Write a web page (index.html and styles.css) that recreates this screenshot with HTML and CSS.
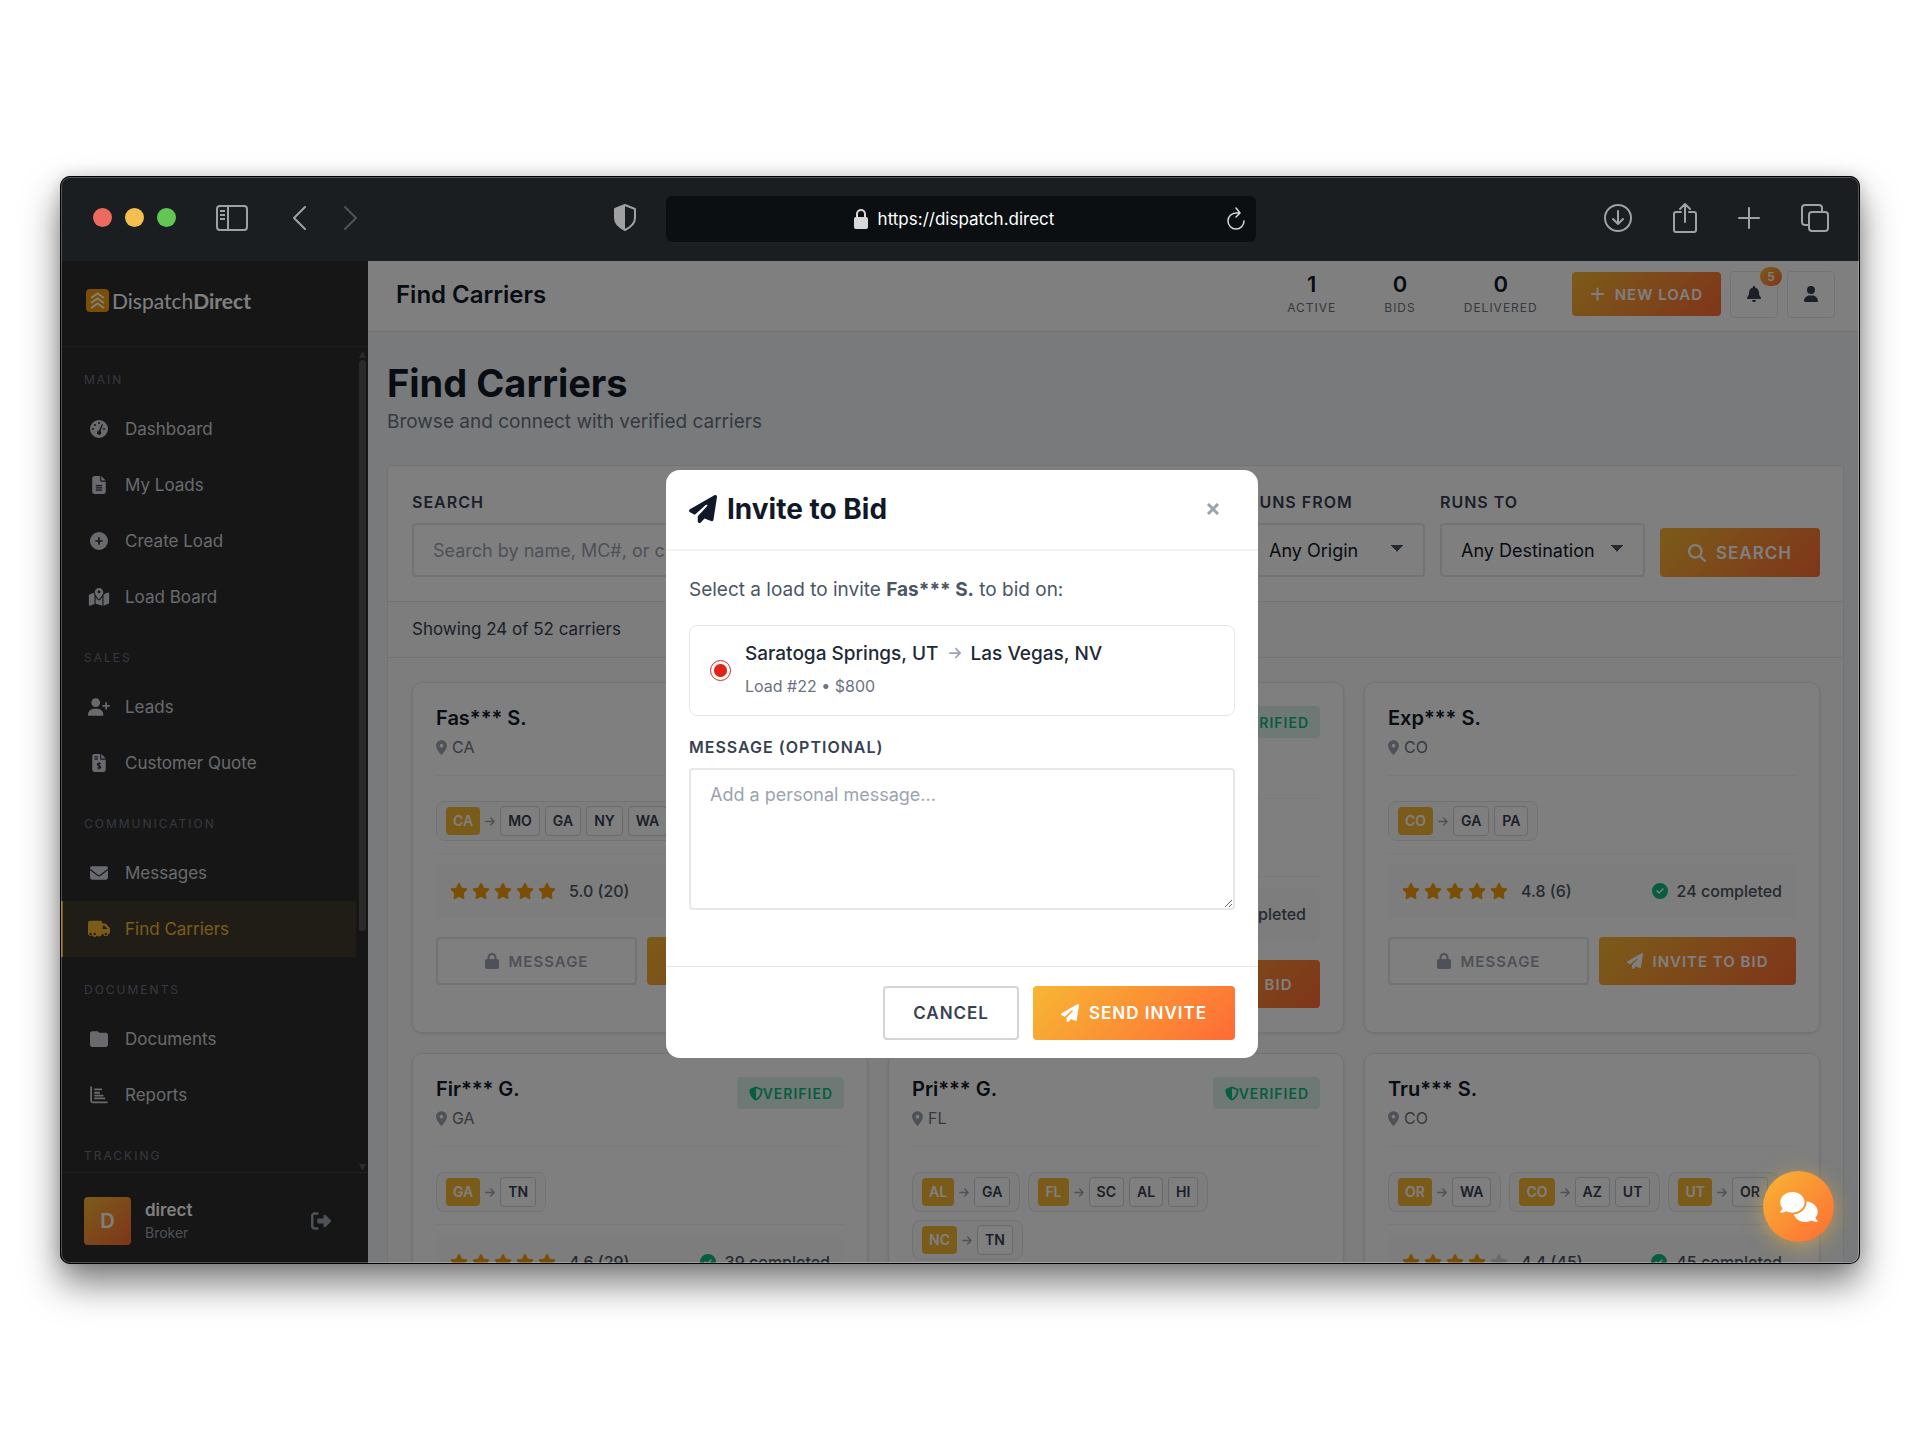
FILE: index.html
```
<!DOCTYPE html>
<html lang="en">
<head>
    <meta charset="UTF-8">
    <meta name="viewport" content="width=device-width, initial-scale=1.0">
    <title>Find Carriers - DispatchDirect</title>
    <link rel="stylesheet" href="styles.css">
</head>
<body>
    <!-- Icon sprite -->
    <svg class="sprite" aria-hidden="true">
        <symbol id="i-plane" viewBox="0 0 512 512"><path d="M498.1 5.6c10.1 7 15.4 19.1 13.5 31.2l-64 416c-1.5 9.7-7.4 18.2-16 23s-18.9 5.4-28 1.6L284 427.7l-68.5 74.1c-8.9 9.7-22.9 12.9-35.2 8.1S160 493.2 160 480V396.4c0-4 1.5-7.8 4.2-10.7L331.8 202.8c5.8-6.3 5.6-16-.4-22s-15.7-6.4-22-.7L106 360.8 17.7 316.6C7.1 311.3 .3 300.7 0 288.9s5.9-22.8 16.1-28.7l448-256c10.7-6.1 23.9-5.5 34 1.4z"/></symbol>
        <symbol id="i-star" viewBox="0 0 576 512"><path d="M316.9 18C311.6 7 300.4 0 288.1 0s-23.4 7-28.8 18L195 150.3 51.4 171.5c-12 1.8-22 10.2-25.7 21.7s-.7 24.2 7.9 32.7L137.8 329 113.2 474.7c-2 12 3 24.2 12.9 31.3s23 8 33.8 2.3l128.3-68.5 128.3 68.5c10.8 5.7 23.9 4.9 33.8-2.3s14.9-19.3 12.9-31.3L438.5 329 542.7 225.9c8.6-8.5 11.7-21.2 7.9-32.7s-13.7-19.9-25.7-21.7L381.2 150.3 316.9 18z"/></symbol>
        <symbol id="i-lock" viewBox="0 0 448 512"><path d="M144 144v48H304V144c0-44.2-35.8-80-80-80s-80 35.8-80 80zM80 192V144C80 64.5 144.5 0 224 0s144 64.5 144 144v48h16c35.3 0 64 28.7 64 64V448c0 35.3-28.7 64-64 64H64c-35.3 0-64-28.7-64-64V256c0-35.3 28.7-64 64-64H80z"/></symbol>
        <symbol id="i-pin" viewBox="0 0 384 512"><path d="M215.7 499.2C267 435 384 279.4 384 192C384 86 298 0 192 0S0 86 0 192c0 87.4 117 243 168.3 307.2c12.3 15.3 35.1 15.3 47.4 0zM192 128a64 64 0 1 1 0 128 64 64 0 1 1 0-128z"/></symbol>
        <symbol id="i-check" viewBox="0 0 512 512"><path d="M256 512A256 256 0 1 0 256 0a256 256 0 1 0 0 512zM369 209L241 337c-9.4 9.4-24.6 9.4-33.9 0l-64-64c-9.4-9.4-9.4-24.6 0-33.9s24.6-9.4 33.9 0l47 47L335 175c9.4-9.4 24.6-9.4 33.9 0s9.4 24.6 0 33.9z"/></symbol>
        <symbol id="i-shield" viewBox="0 0 512 512"><path d="M256 0c4.6 0 9.2 1 13.4 2.9L457.7 82.8c22 9.3 38.4 31 38.3 57.2c-.5 99.2-41.3 280.7-213.6 363.2c-16.7 8-36.1 8-52.8 0C57.3 420.7 16.5 239.2 16 140c-.1-26.2 16.3-47.9 38.3-57.2L242.7 2.9C246.8 1 251.4 0 256 0zm0 66.8V444.8C394 378 431.1 230.1 432 141.4L256 66.8z"/></symbol>
        <symbol id="i-arrow" viewBox="0 0 448 512"><path d="M438.6 278.6c12.5-12.5 12.5-32.8 0-45.3l-160-160c-12.5-12.5-32.8-12.5-45.3 0s-12.5 32.8 0 45.3L338.8 224 32 224c-17.7 0-32 14.3-32 32s14.3 32 32 32l306.7 0L233.4 393.4c-12.5 12.5-12.5 32.8 0 45.3s32.8 12.5 45.3 0l160-160z"/></symbol>
        <symbol id="i-plus" viewBox="0 0 448 512"><path d="M256 80c0-17.7-14.3-32-32-32s-32 14.3-32 32V224H48c-17.7 0-32 14.3-32 32s14.3 32 32 32H192V432c0 17.7 14.3 32 32 32s32-14.3 32-32V288H400c17.7 0 32-14.3 32-32s-14.3-32-32-32H256V80z"/></symbol>
    </svg>

    <div class="browser">
        <div class="toolbar">
            <div class="toolbar-side">
                <div class="lights">
                    <span class="light red"></span>
                    <span class="light yellow"></span>
                    <span class="light green"></span>
                </div>
                <svg class="panel-icon" width="32" height="26" viewBox="0 0 32 26" fill="none" stroke="currentColor" stroke-width="2"><rect x="1" y="1" width="30" height="24" rx="3"/><path d="M12 1v24M4 6h5M4 10h5M4 14h5"/></svg>
                <svg class="back-icon" width="14" height="24" viewBox="0 0 14 24" fill="none" stroke="currentColor" stroke-width="2" stroke-linecap="round" stroke-linejoin="round"><path d="M13 1L2 12l11 11"/></svg>
                <svg class="forward-icon" width="14" height="24" viewBox="0 0 14 24" fill="none" stroke="currentColor" stroke-width="2" stroke-linecap="round" stroke-linejoin="round"><path d="M1 1l11 11L1 23"/></svg>
                <svg class="privacy-icon" width="22" height="27" viewBox="0 0 22 27"><path d="M11 1L21 5v9c0 6-4 9-10 12C5 23 1 20 1 14V5z" fill="none" stroke="currentColor" stroke-width="2" stroke-linejoin="round"/><path d="M11 1v25C5 23 1 20 1 14V5z" fill="currentColor"/></svg>
            </div>
            <div class="address">
                <svg width="14" height="20" viewBox="0 0 14 20"><rect y="8" width="14" height="12" rx="2" fill="currentColor"/><path d="M3 9V5a4 4 0 0 1 8 0v4" fill="none" stroke="currentColor" stroke-width="2"/></svg>
                <span class="address-text">https://dispatch.direct</span>
                <svg class="reload-icon" width="18" height="24" viewBox="0 0 18 24" fill="none" stroke="currentColor" stroke-width="1.5" stroke-linecap="round" stroke-linejoin="round"><path d="M17 14a8 8 0 1 1-8-8h3M9 1l4 5-4 4"/></svg>
            </div>
            <div class="toolbar-side end">
                <svg width="28" height="28" viewBox="0 0 28 28" fill="none" stroke="currentColor" stroke-width="2" stroke-linecap="round" stroke-linejoin="round"><circle cx="14" cy="14" r="13"/><path d="M14 7v13M9 15l5 5 5-5"/></svg>
                <svg width="24" height="30" viewBox="0 0 24 30" fill="none" stroke="currentColor" stroke-width="2" stroke-linecap="round" stroke-linejoin="round"><path d="M8 9H3a2 2 0 0 0-2 2v16a2 2 0 0 0 2 2h18a2 2 0 0 0 2-2V11a2 2 0 0 0-2-2h-5M12 19V1M7 6l5-5 5 5"/></svg>
                <svg width="22" height="22" viewBox="0 0 22 22" fill="none" stroke="currentColor" stroke-width="2" stroke-linecap="round"><path d="M11 1v20M1 11h20"/></svg>
                <svg width="28" height="28" viewBox="0 0 28 28" fill="none" stroke="currentColor" stroke-width="2" stroke-linejoin="round"><rect x="8" y="8" width="19" height="19" rx="3"/><path d="M8 21H4a3 3 0 0 1-3-3V4a3 3 0 0 1 3-3h14a3 3 0 0 1 3 3v4"/></svg>
            </div>
        </div>

        <div class="app">
            <aside class="sidebar">
                <div class="brand">
                    <svg width="23" height="23" viewBox="0 0 23 23"><rect width="23" height="23" rx="4" fill="#f59e0b"/><path d="M5 9l6.500-4.500L18 9M5 14l6.500-4.500L18 14M5 19l6.500-4.500L18 19" fill="none" stroke="#fff" stroke-width="2"/></svg>
                    <span class="brand-name">Dispatch<b>Direct</b></span>
                </div>
                <nav class="nav">
                    <div class="nav-label">Main</div>
                    <a href="#" class="nav-item"><svg viewBox="0 0 18 18"><path fill-rule="evenodd" d="M9 0a9 9 0 1 1 0 18A9 9 0 0 1 9 0zM9 2a1 1 0 1 0 0 2 1 1 0 0 0 0-2zM5 4a1 1 0 1 0 0 2 1 1 0 0 0 0-2zM3 8a1 1 0 1 0 0 2 1 1 0 0 0 0-2zM14 8a1 1 0 1 0 0 2 1 1 0 0 0 0-2zM12 4L9 10.500a2.200 2.200 0 1 0 1.500.5L13 4.500z"/></svg>Dashboard</a>
                    <a href="#" class="nav-item"><svg viewBox="0 0 384 512"><path d="M64 0C28.700 0 0 28.700 0 64V448c0 35.300 28.700 64 64 64H320c35.300 0 64-28.700 64-64V160H256c-17.700 0-32-14.300-32-32V0H64zM256 0V128H384L256 0zM112 256H272c8.800 0 16 7.200 16 16s-7.200 16-16 16H112c-8.800 0-16-7.200-16-16s7.200-16 16-16zm0 64H272c8.800 0 16 7.200 16 16s-7.200 16-16 16H112c-8.800 0-16-7.200-16-16s7.200-16 16-16zm0 64H272c8.800 0 16 7.200 16 16s-7.200 16-16 16H112c-8.800 0-16-7.200-16-16s7.200-16 16-16z"/></svg>My Loads</a>
                    <a href="#" class="nav-item"><svg viewBox="0 0 512 512"><path d="M256 512A256 256 0 1 0 256 0a256 256 0 1 0 0 512zM232 344V280H168c-13.300 0-24-10.700-24-24s10.700-24 24-24h64V168c0-13.300 10.700-24 24-24s24 10.700 24 24v64h64c13.300 0 24 10.700 24 24s-10.700 24-24 24H280v64c0 13.300-10.700 24-24 24s-24-10.700-24-24z"/></svg>Create Load</a>
                    <a href="#" class="nav-item"><svg viewBox="0 0 576 512"><path d="M408 120c0 54.600-73.100 151.900-105.200 192c-7.700 9.600-22 9.600-29.600 0C241.100 271.900 168 174.600 168 120C168 53.700 221.700 0 288 0s120 53.700 120 120zm8 80.400c3.500-6.900 6.700-13.800 9.600-20.600c.5-1.200 1-2.500 1.500-3.700l116-46.400C558.900 123.400 576 135 576 152V422.800c0 9.800-6 18.600-15.100 22.300L416 503V200.400zM137.600 138.300c2.400 14.100 7.200 28.300 12.800 41.500c2.900 6.800 6.100 13.700 9.600 20.600V451.800L32.900 502.700C17.100 509 0 497.400 0 480.400V209.600c0-9.800 6-18.600 15.100-22.300l122.600-49zM327.800 332c13.900-17.400 35.700-45.700 56.200-77V504.300L192 449.400V255c20.500 31.300 42.300 59.600 56.200 77c20.500 25.600 59.100 25.600 79.600 0zM288 152a40 40 0 1 0 0-80 40 40 0 1 0 0 80z"/></svg>Load Board</a>

                    <div class="nav-label">Sales</div>
                    <a href="#" class="nav-item"><svg viewBox="0 0 640 512"><path d="M96 128a128 128 0 1 1 256 0A128 128 0 1 1 96 128zM0 482.300C0 383.800 79.800 304 178.300 304h91.400C368.200 304 448 383.800 448 482.300c0 16.400-13.300 29.700-29.700 29.700H29.700C13.300 512 0 498.700 0 482.300zM504 312V248H440c-13.300 0-24-10.700-24-24s10.700-24 24-24h64V136c0-13.300 10.700-24 24-24s24 10.700 24 24v64h64c13.300 0 24 10.700 24 24s-10.700 24-24 24H552v64c0 13.300-10.700 24-24 24s-24-10.700-24-24z"/></svg>Leads</a>
                    <a href="#" class="nav-item"><svg viewBox="0 0 384 512"><path fill-rule="evenodd" d="M64 0C28.700 0 0 28.700 0 64V448c0 35.300 28.700 64 64 64H320c35.300 0 64-28.700 64-64V160H256c-17.700 0-32-14.300-32-32V0H64zM256 0V128H384L256 0zM64 64h96v32H64zM64 128h96v32H64z"/><path class="cut" d="M240 280c-20-18-96-20-96 18 0 46 100 26 100 74 0 40-76 38-104 14M192 232v208"/></svg>Customer Quote</a>

                    <div class="nav-label">Communication</div>
                    <a href="#" class="nav-item"><svg viewBox="0 0 512 512"><path d="M48 64C21.500 64 0 85.500 0 112c0 15.100 7.100 29.300 19.200 38.400L236.800 313.600c11.400 8.500 27 8.500 38.400 0L492.800 150.400c12.100-9.100 19.200-23.300 19.200-38.400c0-26.500-21.500-48-48-48H48zM0 176V384c0 35.300 28.700 64 64 64H448c35.300 0 64-28.700 64-64V176L294.400 339.200c-22.800 17.100-54 17.100-76.800 0L0 176z"/></svg>Messages</a>
                    <a href="#" class="nav-item active"><svg viewBox="0 0 640 512"><path fill-rule="evenodd" d="M64 16h300q52 0 52 52v28h70q24 0 42 18l88 90q24 24 24 50v90q0 50-48 60a76 76 0 0 1-150 0h-36a76 76 0 0 1-142 34A76 76 0 0 1 120 438 76 76 0 0 1 0 400V80Q0 16 64 16zM430 160v96h140l-92-96zM76 368a34 34 0 1 0 0 68 34 34 0 0 0 0-68zM196 368a34 34 0 1 0 0 68 34 34 0 0 0 0-68zM518 368a34 34 0 1 0 0 68 34 34 0 0 0 0-68z"/></svg>Find Carriers</a>

                    <div class="nav-label">Documents</div>
                    <a href="#" class="nav-item"><svg viewBox="0 0 512 512"><path d="M64 480H448c35.300 0 64-28.700 64-64V142c0-35.300-28.700-64-64-64H268L235 48C223 36 212 32 192 32H64C28.700 32 0 60.700 0 96V416c0 35.300 28.700 64 64 64z"/></svg>Documents</a>
                    <a href="#" class="nav-item"><svg viewBox="0 0 512 512"><path class="line" d="M32 32v390q0 42 42 42h406M140 96h180M140 192h120M140 272h220M140 352h270"/></svg>Reports</a>

                    <div class="nav-label">Tracking</div>
                </nav>
                <div class="scrollbar"><span class="scroll-arrow up"></span><span class="scroll-thumb"></span><span class="scroll-arrow down"></span></div>
                <div class="account">
                    <div class="avatar">D</div>
                    <div class="account-info">
                        <div class="account-name">direct</div>
                        <div class="account-role">Broker</div>
                    </div>
                    <button class="logout" aria-label="Log out"><svg width="20" height="20" viewBox="0 0 512 512"><path d="M377.900 105.900L500.700 228.700c7.200 7.200 11.300 17.100 11.300 27.300s-4.100 20.100-11.300 27.300L377.900 406.100c-6.400 6.400-15 9.900-24 9.900c-18.700 0-33.900-15.200-33.900-33.900l0-62.100-128 0c-17.700 0-32-14.300-32-32l0-64c0-17.700 14.300-32 32-32l128 0 0-62.100c0-18.700 15.200-33.900 33.900-33.900c9 0 17.600 3.600 24 9.900zM160 96L96 96c-17.700 0-32 14.300-32 32l0 256c0 17.700 14.300 32 32 32l64 0c17.700 0 32 14.300 32 32s-14.300 32-32 32l-64 0c-53 0-96-43-96-96L0 128C0 75 43 32 96 32l64 0c17.700 0 32 14.300 32 32s-14.300 32-32 32z"/></svg></button>
                </div>
            </aside>

            <main class="main">
                <header class="topbar">
                    <div class="topbar-title">Find Carriers</div>
                    <div class="stats">
                        <div class="stat"><div class="stat-value">1</div><div class="stat-label">Active</div></div>
                        <div class="stat"><div class="stat-value">0</div><div class="stat-label">Bids</div></div>
                        <div class="stat"><div class="stat-value">0</div><div class="stat-label">Delivered</div></div>
                    </div>
                    <div class="topbar-actions">
                        <button class="btn btn-primary btn-new"><svg width="15" height="16"><use href="#i-plus"/></svg>New Load</button>
                        <button class="icon-btn" aria-label="Notifications">
                            <svg width="14" height="16" viewBox="0 0 448 512"><path d="M224 0c-17.700 0-32 14.300-32 32V51.200C119 66 64 130.600 64 208v18.800c0 47-17.300 92.400-48.500 127.600l-7.400 8.300c-8.400 9.400-10.400 22.900-5.300 34.400S19.400 416 32 416H416c12.600 0 24-7.400 29.200-18.900s3.100-25-5.300-34.400l-7.400-8.300C401.300 319.200 384 273.900 384 226.800V208c0-77.400-55-142-128-156.800V32c0-17.700-14.300-32-32-32zm45.300 493.300c12-12 18.700-28.300 18.700-45.300H224 160c0 17 6.700 33.300 18.700 45.300s28.300 18.700 45.300 18.700s33.300-6.700 45.300-18.700z"/></svg>
                            <span class="badge">5</span>
                        </button>
                        <button class="icon-btn" aria-label="Profile"><svg width="14" height="16" viewBox="0 0 448 512"><path d="M224 256A128 128 0 1 0 224 0a128 128 0 1 0 0 256zm-45.700 48C79.800 304 0 383.800 0 482.300C0 498.700 13.300 512 29.700 512H418.300c16.400 0 29.700-13.300 29.700-29.700C448 383.800 368.200 304 269.700 304H178.300z"/></svg></button>
                    </div>
                </header>

                <div class="content">
                    <h1>Find Carriers</h1>
                    <p class="subtitle">Browse and connect with verified carriers</p>

                    <section class="panel">
                        <form class="filters">
                            <div class="field grow">
                                <label for="q">Search</label>
                                <input id="q" type="text" placeholder="Search by name, MC#, or city...">
                            </div>
                            <div class="field from">
                                <label for="from">Runs From</label>
                                <select id="from"><option>Any Origin</option></select>
                            </div>
                            <div class="field to">
                                <label for="to">Runs To</label>
                                <select id="to"><option>Any Destination</option></select>
                            </div>
                            <button type="button" class="btn btn-primary btn-search"><svg width="18" height="18" viewBox="0 0 512 512"><path d="M416 208c0 45.900-14.900 88.300-40 122.700L502.600 457.400c12.500 12.500 12.500 32.800 0 45.300s-32.800 12.500-45.300 0L330.700 376c-34.400 25.200-76.800 40-122.700 40C93.100 416 0 322.900 0 208S93.100 0 208 0S416 93.100 416 208zM208 352a144 144 0 1 0 0-288 144 144 0 1 0 0 288z"/></svg>Search</button>
                        </form>
                        <div class="result-count">Showing 24 of 52 carriers</div>

                        <div class="cards">
                            <article class="card">
                                <div class="card-head">
                                    <div><h3>Fas*** S.</h3><div class="place"><svg><use href="#i-pin"/></svg>CA</div></div>
                                </div>
                                <div class="lanes">
                                    <div class="lane"><b>CA</b><svg><use href="#i-arrow"/></svg><span>MO</span><span>GA</span><span>NY</span><span>WA</span></div>
                                </div>
                                <div class="rating">
                                    <div class="stars"><svg><use href="#i-star"/></svg><svg><use href="#i-star"/></svg><svg><use href="#i-star"/></svg><svg><use href="#i-star"/></svg><svg><use href="#i-star"/></svg></div>
                                    <span>5.0 (20)</span>
                                    <span class="completed"><svg><use href="#i-check"/></svg>31 completed</span>
                                </div>
                                <div class="card-actions">
                                    <button class="btn btn-outline" disabled><svg width="14" height="16"><use href="#i-lock"/></svg>Message</button>
                                    <button class="btn btn-primary"><svg width="16" height="16"><use href="#i-plane"/></svg>Invite to Bid</button>
                                </div>
                            </article>

                            <article class="card">
                                <div class="card-head">
                                    <div><h3>Roa*** L.</h3><div class="place"><svg><use href="#i-pin"/></svg>TX</div><div class="place">MC# hidden</div></div>
                                    <span class="verified"><svg><use href="#i-shield"/></svg>Verified</span>
                                </div>
                                <div class="lanes">
                                    <div class="lane"><b>TX</b><svg><use href="#i-arrow"/></svg><span>CA</span></div>
                                </div>
                                <div class="rating">
                                    <div class="stars"><svg><use href="#i-star"/></svg><svg><use href="#i-star"/></svg><svg><use href="#i-star"/></svg><svg><use href="#i-star"/></svg><svg><use href="#i-star"/></svg></div>
                                    <span>4.9 (12)</span>
                                    <span class="completed"><svg><use href="#i-check"/></svg>28 completed</span>
                                </div>
                                <div class="card-actions">
                                    <button class="btn btn-outline" disabled><svg width="14" height="16"><use href="#i-lock"/></svg>Message</button>
                                    <button class="btn btn-primary"><svg width="16" height="16"><use href="#i-plane"/></svg>Invite to Bid</button>
                                </div>
                            </article>

                            <article class="card">
                                <div class="card-head">
                                    <div><h3>Exp*** S.</h3><div class="place"><svg><use href="#i-pin"/></svg>CO</div></div>
                                </div>
                                <div class="lanes">
                                    <div class="lane"><b>CO</b><svg><use href="#i-arrow"/></svg><span>GA</span><span>PA</span></div>
                                </div>
                                <div class="rating">
                                    <div class="stars"><svg><use href="#i-star"/></svg><svg><use href="#i-star"/></svg><svg><use href="#i-star"/></svg><svg><use href="#i-star"/></svg><svg><use href="#i-star"/></svg></div>
                                    <span>4.8 (6)</span>
                                    <span class="completed"><svg><use href="#i-check"/></svg>24 completed</span>
                                </div>
                                <div class="card-actions">
                                    <button class="btn btn-outline" disabled><svg width="14" height="16"><use href="#i-lock"/></svg>Message</button>
                                    <button class="btn btn-primary"><svg width="16" height="16"><use href="#i-plane"/></svg>Invite to Bid</button>
                                </div>
                            </article>

                            <article class="card">
                                <div class="card-head">
                                    <div><h3>Fir*** G.</h3><div class="place"><svg><use href="#i-pin"/></svg>GA</div></div>
                                    <span class="verified"><svg><use href="#i-shield"/></svg>Verified</span>
                                </div>
                                <div class="lanes">
                                    <div class="lane"><b>GA</b><svg><use href="#i-arrow"/></svg><span>TN</span></div>
                                </div>
                                <div class="rating">
                                    <div class="stars"><svg><use href="#i-star"/></svg><svg><use href="#i-star"/></svg><svg><use href="#i-star"/></svg><svg><use href="#i-star"/></svg><svg><use href="#i-star"/></svg></div>
                                    <span>4.6 (29)</span>
                                    <span class="completed"><svg><use href="#i-check"/></svg>39 completed</span>
                                </div>
                            </article>

                            <article class="card">
                                <div class="card-head">
                                    <div><h3>Pri*** G.</h3><div class="place"><svg><use href="#i-pin"/></svg>FL</div></div>
                                    <span class="verified"><svg><use href="#i-shield"/></svg>Verified</span>
                                </div>
                                <div class="lanes">
                                    <div class="lane"><b>AL</b><svg><use href="#i-arrow"/></svg><span>GA</span></div>
                                    <div class="lane"><b>FL</b><svg><use href="#i-arrow"/></svg><span>SC</span><span>AL</span><span>HI</span></div>
                                    <div class="lane"><b>NC</b><svg><use href="#i-arrow"/></svg><span>TN</span></div>
                                </div>
                            </article>

                            <article class="card">
                                <div class="card-head">
                                    <div><h3>Tru*** S.</h3><div class="place"><svg><use href="#i-pin"/></svg>CO</div></div>
                                </div>
                                <div class="lanes">
                                    <div class="lane"><b>OR</b><svg><use href="#i-arrow"/></svg><span>WA</span></div>
                                    <div class="lane"><b>CO</b><svg><use href="#i-arrow"/></svg><span>AZ</span><span>UT</span></div>
                                    <div class="lane"><b>UT</b><svg><use href="#i-arrow"/></svg><span>OR</span></div>
                                </div>
                                <div class="rating">
                                    <div class="stars"><svg><use href="#i-star"/></svg><svg><use href="#i-star"/></svg><svg><use href="#i-star"/></svg><svg><use href="#i-star"/></svg><svg class="off"><use href="#i-star"/></svg></div>
                                    <span>4.4 (45)</span>
                                    <span class="completed"><svg><use href="#i-check"/></svg>45 completed</span>
                                </div>
                            </article>
                        </div>
                    </section>
                </div>
            </main>

            <!-- Invite modal -->
            <div class="overlay">
                <div class="modal" role="dialog" aria-labelledby="modal-title">
                    <div class="modal-head">
                        <h2 id="modal-title"><svg width="28" height="28"><use href="#i-plane"/></svg>Invite to Bid</h2>
                        <button class="close" aria-label="Close"><svg width="12" height="12" viewBox="0 0 12 12" fill="none" stroke="currentColor" stroke-width="3"><path d="M1 1l10 10M11 1L1 11"/></svg></button>
                    </div>
                    <div class="modal-body">
                        <p>Select a load to invite <strong>Fas*** S.</strong> to bid on:</p>
                        <label class="load-option">
                            <input type="radio" name="load" checked>
                            <span>
                                <span class="route">Saratoga Springs, UT <svg><use href="#i-arrow"/></svg> Las Vegas, NV</span>
                                <span class="load-meta">Load #22 • $800</span>
                            </span>
                        </label>
                        <div class="field">
                            <label for="message">Message (Optional)</label>
                            <textarea id="message" placeholder="Add a personal message..."></textarea>
                        </div>
                    </div>
                    <div class="modal-foot">
                        <button class="btn btn-cancel">Cancel</button>
                        <button class="btn btn-primary btn-send"><svg width="18" height="18"><use href="#i-plane"/></svg>Send Invite</button>
                    </div>
                </div>
            </div>

            <button class="chat" aria-label="Open chat"><svg width="38" height="30" viewBox="0 0 640 512"><path d="M208 352c114.900 0 208-78.800 208-176S322.900 0 208 0S0 78.800 0 176c0 38.600 14.700 74.300 39.600 103.400c-3.500 9.400-8.700 17.700-14.200 24.700c-4.800 6.200-9.700 11-13.300 14.300c-1.800 1.600-3.300 2.900-4.300 3.700c-.5 .4-.9 .7-1.100 .8l-.2 .2C1 327.200-1.400 334.400 .8 340.900S9.100 352 16 352c21.800 0 43.800-5.600 62.100-12.500c9.200-3.500 17.800-7.400 25.200-11.400C134.100 343.300 169.800 352 208 352zM448 176c0 112.300-99.100 196.900-216.500 207C255.800 457.400 336.400 512 432 512c38.200 0 73.900-8.700 104.700-23.900c7.500 4 16 7.900 25.200 11.400c18.300 6.900 40.300 12.500 62.100 12.500c6.900 0 13.100-4.500 15.200-11.100c2.100-6.600-.2-13.800-5.800-17.900l-.2-.2c-.2-.2-.6-.4-1.100-.8c-1-.8-2.500-2-4.300-3.700c-3.600-3.300-8.500-8.100-13.300-14.300c-5.500-7-10.700-15.400-14.200-24.700c24.900-29 39.600-64.700 39.600-103.400c0-92.800-84.900-168.900-192.600-175.500c.4 5.100 .6 10.300 .6 15.500z"/></svg></button>
        </div>
    </div>
</body>
</html>
```
FILE: styles.css
```
* {
    margin: 0;
    padding: 0;
    box-sizing: border-box;
}

body {
    background: #fff;
    height: 100vh;
    padding: 176px 60px;
    display: flex;
    font-family: Inter, "Liberation Sans", sans-serif;
    font-size: 17px;
    color: #111827;
}

button,
input,
select,
textarea {
    font: inherit;
    color: inherit;
}

button {
    border: none;
    background: none;
    cursor: pointer;
}

svg {
    flex-shrink: 0;
}

.sprite {
    position: absolute;
    width: 0;
    height: 0;
}

/* Browser window */
.browser {
    position: relative;
    flex: 1;
    min-width: 0;
    display: flex;
    flex-direction: column;
    border-radius: 10px;
    overflow: hidden;
    background: #1a1e20;
    box-shadow: 0 20px 36px rgba(0, 0, 0, 0.5), 0 0 16px rgba(0, 0, 0, 0.15);
}

.browser::after {
    content: '';
    position: absolute;
    inset: 0;
    border: 1px solid #000;
    border-radius: 10px;
    box-shadow: inset 0 0 0 1px rgba(255, 255, 255, 0.25);
    pointer-events: none;
    z-index: 20;
}

.toolbar {
    height: 85px;
    flex-shrink: 0;
    display: flex;
    align-items: center;
    padding: 0 31px 0 33px;
    color: #9fa1a2;
}

.toolbar-side {
    flex: 1;
    display: flex;
    align-items: center;
    padding-bottom: 2px;
}

.toolbar-side.end {
    justify-content: flex-end;
    gap: 41px;
}

.lights {
    display: flex;
    gap: 13px;
}

.light {
    width: 19px;
    height: 19px;
    border-radius: 50%;
}

.red { background: #ed6a5f; }
.yellow { background: #f5bf4f; }
.green { background: #62c655; }

.panel-icon { margin-left: 40px; }
.back-icon { margin-left: 44px; }
.forward-icon { margin-left: 38px; opacity: 0.4; }
.privacy-icon { margin: 0 30px 0 auto; }

.address {
    position: relative;
    width: 34%;
    height: 46px;
    padding-right: 14px;
    border-radius: 6px;
    background: #0c0f11;
    color: #d8d8d8;
    display: flex;
    align-items: center;
    justify-content: center;
    gap: 10px;
}

.address-text {
    color: #fff;
    font-size: 17px;
}

.reload-icon {
    position: absolute;
    right: 11px;
}

/* App shell */
.app {
    position: relative;
    flex: 1;
    min-height: 0;
    display: flex;
    background: #f3f4f6;
}

.sidebar {
    position: relative;
    width: 308px;
    flex-shrink: 0;
    display: flex;
    flex-direction: column;
    background: #2d2d2d;
    color: #d1d5db;
}

.brand {
    height: 86px;
    flex-shrink: 0;
    display: flex;
    align-items: center;
    gap: 3px;
    padding: 0 26px 6px;
    border-bottom: 1px solid rgba(255, 255, 255, 0.08);
}

.brand-name {
    font-family: Lato, Inter, sans-serif;
    font-size: 21px;
    color: #fff;
}

.nav {
    flex: 1;
    min-height: 0;
    overflow: hidden;
    padding: 17px 12px 0 0;
}

.nav-label {
    margin: 8px 0 13px;
    padding-left: 24px;
    font-size: 12px;
    line-height: 16px;
    letter-spacing: 2px;
    text-transform: uppercase;
    color: #6b7280;
}

.nav-item {
    display: flex;
    align-items: center;
    gap: 15px;
    height: 56px;
    padding-left: 25px;
    border-left: 3px solid transparent;
    font-size: 17px;
    color: inherit;
    text-decoration: none;
}

.nav-item + .nav-label {
    margin-top: 25px;
}

.nav-item svg {
    width: 22px;
    height: 18px;
    fill: currentColor;
}

.nav-item .line {
    fill: none;
    stroke: currentColor;
    stroke-width: 52;
    stroke-linecap: round;
}

.nav-item .cut {
    fill: none;
    stroke: #2d2d2d;
    stroke-width: 32;
}

.nav-item.active {
    color: #f7b733;
    background: rgba(247, 183, 51, 0.1);
    border-left-color: #f7b733;
}

.scrollbar {
    position: absolute;
    top: 91px;
    bottom: 94px;
    right: 2px;
    width: 7px;
    display: flex;
    flex-direction: column;
    justify-content: space-between;
}

.scroll-thumb {
    height: 571px;
    margin: 2px 0 auto;
    border-radius: 4px;
    background: #555;
}

.scroll-arrow {
    border: 3px solid transparent;
    border-top-width: 0;
    border-bottom: 6px solid #555;
}

.scroll-arrow.down {
    border-bottom-width: 0;
    border-top: 6px solid #555;
}

.account {
    height: 92px;
    flex-shrink: 0;
    display: flex;
    align-items: center;
    gap: 14px;
    padding: 5px 37px 0 24px;
    border-top: 1px solid rgba(255, 255, 255, 0.1);
}

.avatar {
    width: 47px;
    height: 48px;
    display: flex;
    align-items: center;
    justify-content: center;
    border-radius: 4px;
    background: linear-gradient(135deg, #f7b733, #ff6b35);
    color: #fff;
    font-size: 20px;
    font-weight: 600;
}

.account-info {
    flex: 1;
}

.account-name {
    font-weight: 600;
    line-height: 24px;
    color: #fff;
}

.account-role {
    font-size: 14px;
    line-height: 22px;
    color: #9ca3af;
}

.logout svg {
    display: block;
    fill: #9ca3af;
}

/* Top bar */
.main {
    flex: 1;
    min-width: 0;
    overflow: hidden;
}

.topbar {
    height: 71px;
    display: flex;
    align-items: center;
    padding: 0 25px 4px 28px;
    background: #fff;
    border-bottom: 1px solid #e5e7eb;
}

.topbar-title {
    flex: 1;
    font-size: 24px;
    font-weight: 600;
}

.stats {
    display: flex;
    gap: 48px;
    margin-right: 34px;
}

.stat {
    text-align: center;
}

.stat-value {
    font-size: 22px;
    line-height: 28px;
    font-weight: 600;
}

.stat-label {
    font-size: 12px;
    line-height: 20px;
    letter-spacing: 1px;
    text-transform: uppercase;
    color: #6b7280;
}

.topbar-actions {
    display: flex;
    align-items: center;
    gap: 9px;
}

.icon-btn {
    position: relative;
    width: 48px;
    height: 47px;
    display: flex;
    align-items: center;
    justify-content: center;
    border: 1px solid #e5e7eb;
    border-radius: 4px;
    color: #374151;
}

.icon-btn svg {
    fill: currentColor;
}

.badge {
    position: absolute;
    top: -5px;
    right: -5px;
    min-width: 22px;
    height: 19px;
    border-radius: 10px;
    background: linear-gradient(135deg, #f7b733, #ff6b35);
    color: #fff;
    font-size: 12px;
    line-height: 19px;
    font-weight: 600;
}

/* Buttons */
.btn {
    display: flex;
    align-items: center;
    justify-content: center;
    gap: 10px;
    border-radius: 4px;
    font-size: 15px;
    font-weight: 600;
    letter-spacing: 1px;
    text-transform: uppercase;
    white-space: nowrap;
}

.btn svg {
    fill: currentColor;
}

.btn-primary {
    background: linear-gradient(135deg, #f7b733, #ff6b35);
    color: #fff;
}

.btn-new {
    height: 44px;
    padding: 0 18px;
}

.btn-search {
    height: 49px;
    padding: 0 28px;
    font-size: 17px;
}

.btn-outline {
    border: 2px solid #e5e7eb;
    color: #9ca3af;
}

/* Content */
.content {
    padding: 28px 16px 0 19px;
}

h1 {
    font-size: 38px;
    line-height: 46px;
    font-weight: 700;
}

.subtitle {
    margin-top: 2px;
    font-size: 19px;
    line-height: 28px;
    color: #6b7280;
}

.panel {
    margin-top: 29px;
    background: #f8faf9;
    border: 1px solid #e5e7eb;
    border-radius: 4px;
}

.filters {
    display: flex;
    align-items: flex-end;
    gap: 15px;
    padding: 23px 23px 24px 24px;
    background: #fff;
    border-radius: 4px;
}

.field label {
    display: block;
    margin-bottom: 8px;
    font-size: 16px;
    line-height: 26px;
    font-weight: 600;
    letter-spacing: 1px;
    text-transform: uppercase;
    color: #374151;
}

.field.grow {
    flex: 1;
}

.field.from {
    width: 177px;
}

.field.to {
    width: 205px;
}

.field input,
.field select {
    display: block;
    width: 100%;
    height: 54px;
    padding: 0 19px;
    border: 2px solid #e5e7eb;
    border-radius: 4px;
    background: transparent;
    font-size: 18px;
}

/* Dropdown caret made of two triangles */
.field select {
    appearance: none;
    background-image: linear-gradient(to bottom left, #4b5563 50%, transparent 51%), linear-gradient(to bottom right, #4b5563 50%, transparent 51%);
    background-position: right 26px top 20px, right 20px top 20px;
    background-size: 6px 7px;
    background-repeat: no-repeat;
}

::placeholder {
    color: #9ca3af;
}

.result-count {
    height: 57px;
    padding-left: 24px;
    border-top: 1px solid #e5e7eb;
    border-bottom: 1px solid #e5e7eb;
    font-size: 17px;
    line-height: 55px;
    color: #374151;
}

.cards {
    display: grid;
    grid-template-columns: repeat(3, 1fr);
    gap: 20px;
    padding: 24px 23px 24px 24px;
}

.card {
    padding: 23px 23px 24px;
    background: #fff;
    border: 1px solid #e5e7eb;
    border-radius: 10px;
    box-shadow: 0 1px 3px rgba(0, 0, 0, 0.1);
}

.card-head {
    display: flex;
    align-items: flex-start;
    justify-content: space-between;
    padding-bottom: 16px;
    border-bottom: 1px solid #f3f4f6;
}

h3 {
    margin-bottom: 6px;
    font-size: 20px;
    line-height: 24px;
    font-weight: 600;
}

.place {
    display: flex;
    align-items: center;
    gap: 5px;
    font-size: 16px;
    line-height: 23px;
    color: #6b7280;
}

.place svg {
    width: 11px;
    height: 15px;
    fill: #9ca3af;
}

.verified {
    display: flex;
    align-items: center;
    height: 32px;
    padding: 0 11px 0 12px;
    border-radius: 4px;
    background: #ddf2ea;
    color: #10b981;
    font-size: 14px;
    font-weight: 600;
    letter-spacing: 1px;
    text-transform: uppercase;
}

.verified svg {
    width: 14px;
    height: 15px;
    fill: currentColor;
}

.lanes {
    display: flex;
    flex-wrap: wrap;
    gap: 8px;
    padding: 25px 0 12px;
    border-bottom: 1px solid #f3f4f6;
}

.lane {
    display: flex;
    align-items: center;
    gap: 5px;
    height: 40px;
    padding: 0 9px;
    background: #f8faf9;
    border: 1px solid #e5e7eb;
    border-radius: 8px;
    font-size: 14px;
    font-weight: 600;
    color: #374151;
}

.lane b {
    padding: 0 7px;
    border-radius: 4px;
    background: #f7b733;
    color: #fff;
    font-weight: 600;
    line-height: 28px;
}

.lane span {
    padding: 0 7px;
    border: 1px solid #d1d5db;
    border-radius: 4px;
    background: #fff;
    line-height: 28px;
}

.lane svg {
    width: 10px;
    height: 11px;
    fill: #9ca3af;
}

.rating {
    display: flex;
    align-items: center;
    height: 54px;
    margin-top: 10px;
    padding: 0 14px;
    border-radius: 8px;
    background: #f8faf9;
    font-size: 16px;
    font-weight: 500;
    color: #4b5563;
}

.stars {
    display: flex;
    gap: 4px;
    margin-right: 13px;
}

.stars svg {
    width: 18px;
    height: 16px;
    fill: #f59e0b;
}

.stars .off {
    fill: #d1d5db;
}

.completed {
    display: flex;
    align-items: center;
    gap: 9px;
    margin-left: auto;
}

.completed svg {
    width: 16px;
    height: 16px;
    fill: #10b981;
}

.card-actions {
    display: flex;
    gap: 10px;
    margin-top: 19px;
}

.card-actions .btn {
    flex: 1;
    height: 48px;
}

/* Modal */
.overlay {
    position: absolute;
    inset: 0;
    display: flex;
    align-items: center;
    justify-content: center;
    padding: 2px 0 0 4px;
    background: rgba(0, 0, 0, 0.5);
    z-index: 10;
}

.modal {
    width: 592px;
    background: #fff;
    border-radius: 14px;
}

.modal-head {
    display: flex;
    align-items: center;
    justify-content: space-between;
    height: 81px;
    padding: 0 39px 0 23px;
    border-bottom: 2px solid #f3f4f6;
}

h2 {
    display: flex;
    align-items: center;
    gap: 10px;
    font-size: 28px;
    font-weight: 700;
}

h2 svg {
    fill: currentColor;
}

.close {
    color: #9ca3af;
}

.modal-body {
    padding: 24px 23px 56px;
}

.modal-body p {
    margin-bottom: 20px;
    font-size: 19px;
    line-height: 30px;
    color: #4b5563;
}

.load-option {
    display: flex;
    align-items: center;
    gap: 14px;
    height: 91px;
    margin-bottom: 18px;
    padding: 0 20px;
    border: 1px solid #e5e7eb;
    border-radius: 8px;
}

.load-option input {
    appearance: none;
    width: 21px;
    height: 21px;
    border: 1px solid #e2231a;
    border-radius: 50%;
    background: radial-gradient(circle, #e2231a 6px, #fff 7px);
}

.route {
    display: block;
    font-size: 19px;
    line-height: 32px;
    font-weight: 500;
    color: #1f2937;
}

.route svg {
    width: 14px;
    height: 14px;
    margin: 0 4px;
    fill: #9ca3af;
}

.load-meta {
    display: block;
    font-size: 16px;
    line-height: 32px;
    color: #6b7280;
}

.field textarea {
    display: block;
    width: 100%;
    height: 142px;
    padding: 11px 19px;
    border: 2px solid #e5e7eb;
    border-radius: 4px;
    font-size: 18px;
    line-height: 28px;
}

.modal-foot {
    display: flex;
    justify-content: flex-end;
    gap: 14px;
    padding: 19px 23px 18px;
    border-top: 1px solid #e5e7eb;
}

.modal-foot .btn {
    height: 54px;
    font-size: 17px;
    padding: 0 28px;
}

.modal-foot .btn-cancel {
    border: 2px solid #d1d5db;
    color: #374151;
}

.chat {
    position: absolute;
    right: 26px;
    bottom: 22px;
    width: 71px;
    height: 71px;
    display: flex;
    align-items: center;
    justify-content: center;
    border-radius: 50%;
    background: linear-gradient(135deg, #f7b733, #ff6b35);
    box-shadow: 0 4px 20px rgba(247, 183, 51, 0.5);
    z-index: 11;
}

.chat svg {
    fill: #fff;
}
```
